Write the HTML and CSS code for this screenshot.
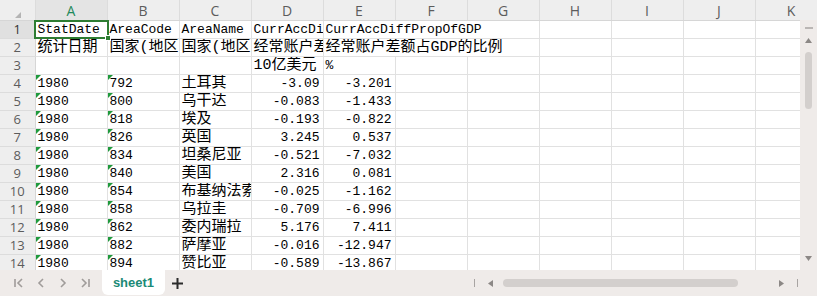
FILE: index.html
```html
<!DOCTYPE html>
<html lang="zh-CN">
<head>
    <meta charset="UTF-8">
    <meta name="viewport" content="width=device-width, initial-scale=1.0">
    <title>sheet1</title>
    <link rel="stylesheet" href="styles.css">
</head>
<body>
    <div class="book">
        <div class="grid-wrap">
            <table class="grid">
                <colgroup>
                    <col class="c-head">
                    <col><col><col><col><col><col><col><col><col><col><col>
                </colgroup>
                <thead>
                    <tr class="col-head">
                        <th class="corner"><svg width="6" height="6" viewBox="0 0 6 6"><polygon points="6,0 6,6 0,6" fill="#b4b4b4"/></svg></th>
                        <th class="on">A</th><th>B</th><th>C</th><th>D</th><th>E</th><th>F</th>
                        <th>G</th><th>H</th><th>I</th><th>J</th><th>K</th>
                    </tr>
                </thead>
                <tbody>
                    <tr>
                        <th class="on">1</th>
                        <td class="sel">StatDate</td><td>AreaCode</td><td>AreaName</td><td>CurrAccDiff</td>
                        <td colspan="3">CurrAccDiffPropOfGDP</td><td></td><td></td><td></td><td></td>
                    </tr>
                    <tr>
                        <th>2</th>
                        <td class="zh">统计日期</td><td class="zh">国家(地区)代码</td><td class="zh">国家(地区)名称</td><td class="zh">经常账户差额</td>
                        <td class="zh" colspan="3">经常账户差额占GDP的比例</td><td></td><td></td><td></td><td></td>
                    </tr>
                    <tr>
                        <th>3</th>
                        <td></td><td></td><td></td><td class="zh">10亿美元</td><td>%</td>
                        <td></td><td></td><td></td><td></td><td></td><td></td>
                    </tr>
                    <tr>
                        <th>4</th>
                        <td class="t">1980</td><td class="t">792</td><td class="zh">土耳其</td><td class="num">-3.09</td><td class="num">-3.201</td>
                        <td></td><td></td><td></td><td></td><td></td><td></td>
                    </tr>
                    <tr>
                        <th>5</th>
                        <td class="t">1980</td><td class="t">800</td><td class="zh">乌干达</td><td class="num">-0.083</td><td class="num">-1.433</td>
                        <td></td><td></td><td></td><td></td><td></td><td></td>
                    </tr>
                    <tr>
                        <th>6</th>
                        <td class="t">1980</td><td class="t">818</td><td class="zh">埃及</td><td class="num">-0.193</td><td class="num">-0.822</td>
                        <td></td><td></td><td></td><td></td><td></td><td></td>
                    </tr>
                    <tr>
                        <th>7</th>
                        <td class="t">1980</td><td class="t">826</td><td class="zh">英国</td><td class="num">3.245</td><td class="num">0.537</td>
                        <td></td><td></td><td></td><td></td><td></td><td></td>
                    </tr>
                    <tr>
                        <th>8</th>
                        <td class="t">1980</td><td class="t">834</td><td class="zh">坦桑尼亚</td><td class="num">-0.521</td><td class="num">-7.032</td>
                        <td></td><td></td><td></td><td></td><td></td><td></td>
                    </tr>
                    <tr>
                        <th>9</th>
                        <td class="t">1980</td><td class="t">840</td><td class="zh">美国</td><td class="num">2.316</td><td class="num">0.081</td>
                        <td></td><td></td><td></td><td></td><td></td><td></td>
                    </tr>
                    <tr>
                        <th>10</th>
                        <td class="t">1980</td><td class="t">854</td><td class="zh">布基纳法索</td><td class="num">-0.025</td><td class="num">-1.162</td>
                        <td></td><td></td><td></td><td></td><td></td><td></td>
                    </tr>
                    <tr>
                        <th>11</th>
                        <td class="t">1980</td><td class="t">858</td><td class="zh">乌拉圭</td><td class="num">-0.709</td><td class="num">-6.996</td>
                        <td></td><td></td><td></td><td></td><td></td><td></td>
                    </tr>
                    <tr>
                        <th>12</th>
                        <td class="t">1980</td><td class="t">862</td><td class="zh">委内瑞拉</td><td class="num">5.176</td><td class="num">7.411</td>
                        <td></td><td></td><td></td><td></td><td></td><td></td>
                    </tr>
                    <tr>
                        <th>13</th>
                        <td class="t">1980</td><td class="t">882</td><td class="zh">萨摩亚</td><td class="num">-0.016</td><td class="num">-12.947</td>
                        <td></td><td></td><td></td><td></td><td></td><td></td>
                    </tr>
                    <tr>
                        <th>14</th>
                        <td class="t">1980</td><td class="t">894</td><td class="zh">赞比亚</td><td class="num">-0.589</td><td class="num">-13.867</td>
                        <td></td><td></td><td></td><td></td><td></td><td></td>
                    </tr>
                </tbody>
            </table>

            <div class="vscroll">
                <span class="vs-min"></span>
                <svg class="vs-up" width="7" height="5" viewBox="0 0 7 5"><polygon points="3.5,0 7,5 0,5" fill="#8c8886"/></svg>
                <span class="vs-thumb"></span>
                <svg class="vs-down" width="7" height="5" viewBox="0 0 7 5"><polygon points="0,0 7,0 3.5,5" fill="#8c8886"/></svg>
            </div>
        </div>

        <div class="tabbar">
            <div class="nav">
                <span class="nav-btn"><svg width="12" height="12" viewBox="0 0 12 12"><path d="M2 2v8M9 2L5 6l4 4" fill="none" stroke="#a09c9a" stroke-width="1.6"/></svg></span>
                <span class="nav-btn"><svg width="12" height="12" viewBox="0 0 12 12"><path d="M8 2L4 6l4 4" fill="none" stroke="#a09c9a" stroke-width="1.6"/></svg></span>
                <span class="nav-btn"><svg width="12" height="12" viewBox="0 0 12 12"><path d="M4 2l4 4-4 4" fill="none" stroke="#a09c9a" stroke-width="1.6"/></svg></span>
                <span class="nav-btn"><svg width="12" height="12" viewBox="0 0 12 12"><path d="M3 2l4 4-4 4M10 2v8" fill="none" stroke="#a09c9a" stroke-width="1.6"/></svg></span>
            </div>
            <div class="tab">sheet1</div>
            <span class="add"><svg width="11" height="11" viewBox="0 0 11 11"><path d="M5.5 0v11M0 5.5h11" stroke="#2b2b2b" stroke-width="2"/></svg></span>
            <div class="hscroll">
                <span class="hs-sep"></span>
                <svg class="hs-left" width="5" height="7" viewBox="0 0 5 7"><polygon points="5,0 5,7 0,3.5" fill="#8c8886"/></svg>
                <span class="hs-thumb"></span>
                <svg class="hs-right" width="5" height="7" viewBox="0 0 5 7"><polygon points="0,0 5,3.5 0,7" fill="#8c8886"/></svg>
                <span class="hs-sep"></span>
            </div>
        </div>
    </div>
</body>
</html>
```

FILE: styles.css
```css
body {
    margin: 0;
    font-family: "Liberation Mono", "Noto Sans CJK SC", monospace;
    background-color: #fff;
}

.book {
    width: 817px;
    height: 296px;
    display: flex;
    flex-direction: column;
    overflow: hidden;
}

/* grid */
.grid-wrap {
    position: relative;
    height: 270px;
    flex: none;
    overflow: hidden;
}

.grid {
    table-layout: fixed;
    border-collapse: collapse;
    width: 827px;
}

.grid col {
    width: 72px;
}

.grid col.c-head {
    width: 35px;
}

.col-head th {
    height: 20px;
    padding: 0;
    background-color: #eeeeee;
    border-right: 1px solid #dcdcdc;
    border-bottom: 1px solid #d6d6d6;
    font-family: "Open Sans", "Noto Sans", sans-serif;
    font-size: 14px;
    font-weight: normal;
    color: #5c5c5c;
    text-align: center;
}

.col-head th.on {
    background-color: #e4e4e4;
    color: #1f8a5c;
}

.col-head th.corner svg {
    display: block;
    margin: 9px 0 0 15px;
}

tbody tr {
    height: 18px;
}

tbody th {
    padding: 0;
    background-color: #eeeeee;
    border-right: 1px solid #d6d6d6;
    border-bottom: 1px solid #dcdcdc;
    font-family: "Open Sans", "Noto Sans", sans-serif;
    font-size: 13px;
    font-weight: normal;
    color: #5c5c5c;
    text-align: center;
    line-height: 17px;
}

tbody th.on {
    background-color: #e0e0e0;
    color: #333;
}

tbody td {
    position: relative;
    padding: 0 2px;
    border: 1px solid #e1e1e1;
    font-size: 13px;
    line-height: 17px;
    color: #000;
    white-space: nowrap;
    overflow: hidden;
    vertical-align: bottom;
}

tbody td.zh {
    font-size: 15px;
}

tbody td.num {
    text-align: right;
    padding-right: 3px;
}

/* number stored as text marker */
tbody td.t::before {
    content: "";
    position: absolute;
    top: 0;
    left: 0;
    border-top: 5px solid #1f9a3c;
    border-right: 5px solid transparent;
}

/* active cell: frame and fill handle */
tbody td.sel {
    z-index: 1;
    overflow: visible;
}

tbody td.sel::before {
    content: "";
    position: absolute;
    top: -1px;
    left: -2px;
    right: -2px;
    bottom: -1px;
    border: 2px solid #2e7d32;
}

tbody td.sel::after {
    content: "";
    position: absolute;
    right: -4px;
    bottom: -3px;
    width: 4px;
    height: 4px;
    background-color: #2e7d32;
    border: 1px solid #fff;
}

/* vertical scrollbar, over the grid */
.vscroll {
    position: absolute;
    z-index: 2;
    top: 20px;
    right: 0;
    bottom: 0;
    width: 17px;
    background-color: #efebe9;
    display: flex;
    flex-direction: column;
    align-items: center;
}

.vs-min {
    width: 8px;
    height: 2px;
    margin-top: 7px;
    background-color: #bab6b4;
}

.vs-up {
    margin-top: 9px;
}

.vs-thumb {
    width: 7px;
    height: 57px;
    margin-top: 9px;
    border-radius: 4px;
    background-color: #d3cfcd;
}

.vs-down {
    margin-top: auto;
    margin-bottom: 9px;
}

/* sheet tabs */
.tabbar {
    flex: 1;
    display: flex;
    align-items: center;
    background-color: #efebe9;
}

.nav {
    display: flex;
    padding-left: 8px;
}

.nav-btn {
    width: 22px;
    display: flex;
    justify-content: center;
}

.tab {
    align-self: flex-start;
    width: 63px;
    height: 25px;
    margin-left: 6px;
    background-color: #fff;
    border-radius: 0 0 6px 6px;
    font-family: "Liberation Sans", Arial, sans-serif;
    font-size: 13px;
    font-weight: bold;
    line-height: 25px;
    text-align: center;
    color: #1b8a76;
}

.add {
    display: flex;
    margin-left: 7px;
}

.hscroll {
    margin-left: auto;
    margin-right: 19px;
    display: flex;
    align-items: center;
}

.hs-sep {
    width: 1px;
    height: 8px;
    background-color: #a8a4a2;
}

.hs-left {
    margin-left: 13px;
}

.hs-thumb {
    width: 235px;
    height: 8px;
    margin-left: 10px;
    border-radius: 4px;
    background-color: #d3cfcd;
}

.hs-right {
    margin-left: 41px;
    margin-right: 13px;
}
```
